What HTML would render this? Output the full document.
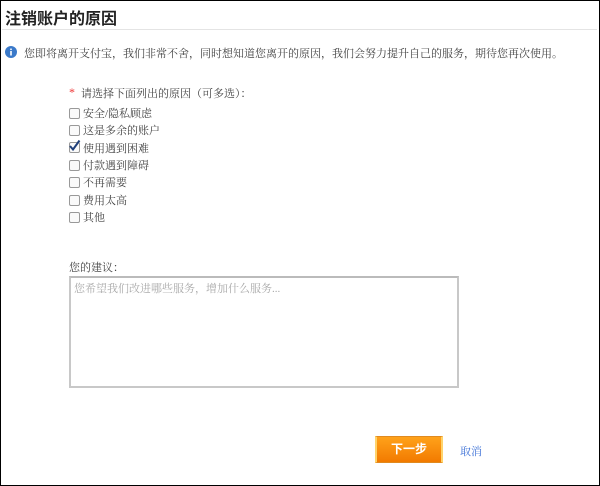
<!DOCTYPE html>
<html><head><meta charset="utf-8"><style>
body{margin:0;width:600px;height:486px;background:#fff;font-family:"Liberation Serif","Noto Serif CJK SC",serif;color:#333;position:relative;overflow:hidden}
.frame{position:absolute;left:0;top:0;width:598px;height:484px;border:1px solid #000}
.a{position:absolute;white-space:nowrap}
h1{position:absolute;left:5px;top:5px;margin:0;font-size:16px;font-weight:bold;color:#222;font-family:"Liberation Sans","Noto Sans CJK SC",sans-serif}
.line{position:absolute;left:2px;top:29px;width:595px;height:1px;background:#e4e4e4}
.cb{position:absolute;left:69px;width:9px;height:9px;border:1px solid #999;border-radius:2px;background:#fafafa}
.lbl{position:absolute;left:83px;font-size:11px;color:#444}
</style></head><body>
<div class="frame"></div>
<h1>注销账户的原因</h1>
<div class="line"></div>
<svg class="a" style="left:5px;top:46px" width="12" height="12"><circle cx="6" cy="6" r="6" fill="#3a79c9"/><rect x="5.2" y="5" width="1.6" height="4.5" fill="#fff"/><circle cx="6" cy="3.3" r="0.9" fill="#fff"/></svg>
<div class="a" style="left:24px;top:45px;font-size:11px;color:#444">您即将离开支付宝，我们非常不舍，同时想知道您离开的原因，我们会努力提升自己的服务，期待您再次使用。</div>
<div class="a" style="left:69px;top:85px;font-size:12px;color:#e33">*</div>
<div class="a" style="left:81px;top:85px;font-size:11px;color:#444">请选择下面列出的原因（可多选）：</div>
<div class="cb" style="top:108px"></div><div class="lbl" style="top:105px">安全/隐私顾虑</div>
<div class="cb" style="top:125px"></div><div class="lbl" style="top:122px">这是多余的账户</div>
<div class="cb" style="top:142px"></div><svg class="a" style="left:68px;top:139px" width="13" height="13"><path d="M2 7 L5 10.5 L11.5 1.5" stroke="#1f3f7a" stroke-width="2" fill="none"/></svg><div class="lbl" style="top:140px">使用遇到困难</div>
<div class="cb" style="top:160px"></div><div class="lbl" style="top:157px">付款遇到障碍</div>
<div class="cb" style="top:177px"></div><div class="lbl" style="top:174px">不再需要</div>
<div class="cb" style="top:195px"></div><div class="lbl" style="top:192px">费用太高</div>
<div class="cb" style="top:212px"></div><div class="lbl" style="top:209px">其他</div>
<div class="a" style="left:69px;top:259px;font-size:11px;color:#444">您的建议：</div>
<div class="a" style="left:69px;top:276px;width:386px;height:108px;border:2px solid #c8c8c8;border-top-color:#bbb"></div>
<div class="a" style="left:74px;top:280px;font-size:11px;color:#aaa">您希望我们改进哪些服务，增加什么服务...</div>
<div class="a" style="left:375px;top:436px;width:68px;height:27px;background:linear-gradient(#ffa21a,#f27a00);border:1px solid #e08a20;box-sizing:border-box;border-left:2px solid #ffd36b;border-right:2px solid #ffd36b;color:#fff;font-weight:bold;font-size:12px;text-align:center;line-height:25px;font-family:'Liberation Sans','Noto Sans CJK SC',sans-serif">下一步</div>
<div class="a" style="left:460px;top:443px;font-size:11px;color:#3a6fd6">取消</div>
</body></html>
